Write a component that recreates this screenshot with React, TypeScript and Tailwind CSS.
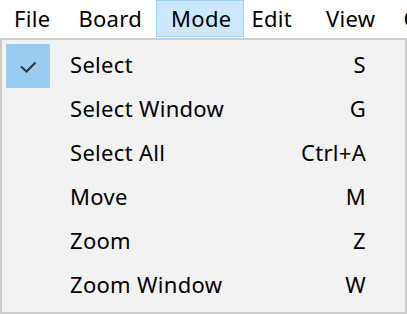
const menus = ["File", "Board", "Mode", "Edit", "View", "Options"];

const items = [
  { label: "Select", key: "S", checked: true },
  { label: "Select Window", key: "G" },
  { label: "Select All", key: "Ctrl+A" },
  { label: "Move", key: "M" },
  { label: "Zoom", key: "Z" },
  { label: "Zoom Window", key: "W" },
];

export default function App() {
  return (
    <div
      className="w-[407px] h-[314px] overflow-hidden bg-white text-black"
      style={{ fontFamily: '"Noto Sans", "Open Sans", sans-serif' }}
    >
      {/* menu bar */}
      <div className="flex h-[38px] items-start whitespace-nowrap text-[22px] tracking-[0.3px]">
        {menus.map((m) => (
          <div
            key={m}
            className={
              m === "Mode"
                ? "flex h-[37px] shrink-0 items-center border border-[#99d1ff] bg-[#cce8ff] pl-[14px] pr-[12px]"
                : m === "Edit"
                  ? "flex h-[37px] shrink-0 items-center border border-transparent pl-[6px] pr-[19px]"
                  : "flex h-[37px] shrink-0 items-center border border-transparent px-[13px]"
            }
          >
            {m}
          </div>
        ))}
      </div>

      {/* dropdown */}
      <div className="h-[276px] border-2 border-[#cccccc] bg-[#f2f2f2] px-[4px] pt-[4px] text-[22px] tracking-[0.3px]">
        {items.map((it) => (
          <div key={it.label} className="flex h-[44px] items-center">
            <div
              className={
                it.checked
                  ? "flex h-[44px] w-[44px] items-center justify-center bg-[#99ccf3]"
                  : "h-[44px] w-[44px]"
              }
            >
              {it.checked && (
                <svg width="24" height="24" viewBox="0 0 24 24">
                  <path d="M5 12.5 L10.5 17.5 L19.5 8.5" fill="none" stroke="#333" strokeWidth="2" />
                </svg>
              )}
            </div>
            <div className="ml-[20px] flex-1 pb-[3px]">{it.label}</div>
            <div className="mr-[35px] pb-[3px]">{it.key}</div>
          </div>
        ))}
      </div>
    </div>
  );
}
